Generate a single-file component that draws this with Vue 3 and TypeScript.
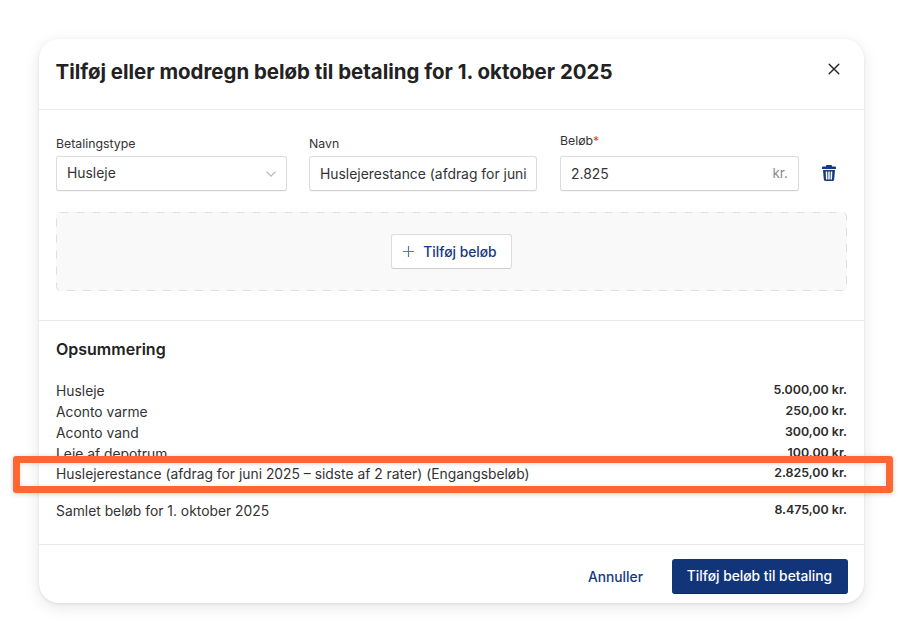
<script setup lang="ts">
interface Row { label: string; amount: string }
const rows: Row[] = [
  { label: 'Husleje', amount: '5.000,00 kr.' },
  { label: 'Aconto varme', amount: '250,00 kr.' },
  { label: 'Aconto vand', amount: '300,00 kr.' },
  { label: 'Leje af depotrum', amount: '100,00 kr.' },
  { label: 'Huslejerestance (afdrag for juni 2025 – sidste af 2 rater) (Engangsbeløb)', amount: '2.825,00 kr.' },
]
</script>

<template>
  <div class="page">
    <section class="card">
      <header class="head">
        <h1 class="title">Tilføj eller modregn beløb til betaling for 1. oktober 2025</h1>
        <svg class="close" width="12" height="12" viewBox="0 0 12 12" fill="none" stroke="#222" stroke-width="1.4" stroke-linecap="round">
          <path d="M1.2 1.2 10.8 10.8M10.8 1.2 1.2 10.8" />
        </svg>
      </header>

      <div class="form">
        <div class="fields">
          <div class="field f-type">
            <label class="label">Betalingstype</label>
            <div class="control select">
              <span class="value v-select">Husleje</span>
              <svg width="10" height="6" viewBox="0 0 10 6" fill="none" stroke="#b5b5b5" stroke-width="1.1">
                <path d="M.5.7 5 5.2 9.5.7" />
              </svg>
            </div>
          </div>
          <div class="field f-name">
            <label class="label">Navn</label>
            <div class="control"><span class="value">Huslejerestance (afdrag for juni</span></div>
          </div>
          <div class="field f-amount">
            <label class="label label-high">Beløb<span class="req">*</span></label>
            <div class="control amount">
              <span class="value">2.825</span>
              <span class="unit">kr.</span>
            </div>
          </div>
          <svg class="trash" width="14" height="16" viewBox="0 0 14 16">
            <path fill="#16397f" fill-rule="evenodd" d="M5 0h4a1 1 0 0 1 1 1v.6h3a1 1 0 0 1 1 1V4H0V2.600a1 1 0 0 1 1-1h3V1a1 1 0 0 1 1-1ZM1 5h12l-.8 9.600A1.500 1.500 0 0 1 10.700 16H3.300a1.500 1.500 0 0 1-1.500-1.400L1 5Zm2.700 1.600.3 7.800h1.500L5.200 6.600H3.700Zm2.550 0v7.800h1.500V6.600h-1.500Zm2.550 0-.3 7.800h1.500l.3-7.800H8.800Z" />
          </svg>
        </div>

        <div class="dropzone">
          <svg class="dashes" width="791" height="79" viewBox="0 0 791 79" fill="none">
            <rect x=".5" y=".5" width="790" height="78" rx="4" stroke="#dedede" stroke-dasharray="8 8" />
          </svg>
          <button class="add" type="button">
            <svg width="11" height="11" viewBox="0 0 11 11" fill="none" stroke="#5f78a8" stroke-width="1.2">
              <path d="M5.500 0v11M0 5.500h11" />
            </svg>
            <span>Tilføj beløb</span>
          </button>
        </div>
      </div>

      <div class="summary">
        <h2 class="subtitle">Opsummering</h2>
        <div class="rows">
          <div v-for="row in rows" :key="row.label" class="row">
            <span class="row-label">{{ row.label }}</span>
            <span class="row-amount">{{ row.amount }}</span>
          </div>
          <div class="highlight"></div>
        </div>
        <div class="row total">
          <span class="row-label">Samlet beløb for 1. oktober 2025</span>
          <span class="row-amount">8.475,00 kr.</span>
        </div>
      </div>

      <footer class="foot">
        <button class="cancel" type="button">Annuller</button>
        <button class="primary" type="button">Tilføj beløb til betaling</button>
      </footer>
    </section>
  </div>
</template>

<style scoped>
.page {
  width: 903px;
  height: 642px;
  box-sizing: border-box;
  padding: 39px 39px 0;
  background: #fff;
  font-family: Inter, "Liberation Sans", sans-serif;
  color: #2b2b2b;
}
.card {
  width: 825px;
  height: 564px;
  box-sizing: border-box;
  border-radius: 20px;
  background: #fff;
  box-shadow: 0 4px 16px rgba(0, 0, 0, 0.1), 0 1px 3px rgba(0, 0, 0, 0.08);
  display: flex;
  flex-direction: column;
}
.head {
  height: 71px;
  box-sizing: border-box;
  border-bottom: 1px solid #e9e9e9;
  padding: 0 24px 0 16.500px;
  display: flex;
  justify-content: space-between;
  align-items: flex-start;
}
.title {
  margin: 19px 0 0;
  font-size: 20.45px;
  line-height: 28px;
  font-weight: 700;
  color: #222;
}
.close { margin-top: 24px; }
.form {
  height: 211px;
  box-sizing: border-box;
  border-bottom: 1px solid #e9e9e9;
  padding: 0 17px;
}
.fields {
  height: 102px;
  display: flex;
  align-items: flex-end;
  padding-bottom: 21px;
  box-sizing: border-box;
}
.field { display: flex; flex-direction: column; }
.f-type { width: 231px; margin-right: 22px; }
.f-name { width: 228px; margin-right: 23px; }
.f-amount { width: 239px; margin-right: 23px; }
.label {
  font-size: 12.3px;
  line-height: 16px;
  color: #333;
  margin-bottom: 4px;
}
.label-high { margin-bottom: 7px; }
.req { color: #e5482d; }
.control {
  height: 35px;
  box-sizing: border-box;
  border: 1px solid #dcdcdc;
  border-bottom-color: #d2d2d2;
  border-radius: 3px;
  background: #fff;
  padding: 0 10px;
  display: flex;
  align-items: center;
  justify-content: space-between;
  box-shadow: 0 1px 1px rgba(0, 0, 0, 0.04);
}
.value {
  font-size: 13.9px;
  color: #333;
  white-space: nowrap;
}
.v-select { margin-top: -1px; }
.unit { font-size: 13.5px; color: #8c8c8c; margin-top: -1px; }
.trash { margin-bottom: 10px; }
.dropzone {
  position: relative;
  height: 79px;
  box-sizing: border-box;
  border-radius: 4px;
  background: #f9f9f9;
  display: flex;
  align-items: center;
  justify-content: center;
}
.dashes {
  position: absolute;
  left: 0;
  top: 0;
}
.add {
  position: relative;
  height: 35px;
  width: 121px;
  box-sizing: border-box;
  border: 1px solid #dcdcdc;
  border-bottom-color: #cfcfcf;
  border-radius: 3px;
  background: #fff;
  color: #16397f;
  font: 500 13.800px Inter, "Liberation Sans", sans-serif;
  display: flex;
  align-items: center;
  justify-content: center;
  gap: 9px;
  padding: 0 3px 0 0;
}
.summary {
  flex: 1;
  box-sizing: border-box;
  border-bottom: 1px solid #e9e9e9;
  padding: 0 17px;
}
.subtitle {
  margin: 18px 0 21.8px;
  font-size: 16px;
  line-height: 20px;
  font-weight: 600;
  color: #222;
}
.rows { position: relative; }
.row {
  height: 20.8px;
  display: flex;
  justify-content: space-between;
  align-items: center;
}
.row-label { font-size: 13.85px; color: #333; }
.row-amount {
  font-size: 12.4px;
  font-weight: 600;
  color: #2b2b2b;
  margin-top: -3px;
}
.total { margin-top: 16px; }
.highlight {
  position: absolute;
  left: -43px;
  right: -46px;
  top: 75.2px;
  height: 37px;
  box-sizing: border-box;
  border: 7px solid #ff6633;
  border-radius: 3px;
  box-shadow: 0 1px 5px rgba(0, 0, 0, 0.2), inset 0 1px 5px rgba(0, 0, 0, 0.12);
}
.foot {
  height: 58px;
  box-sizing: border-box;
  padding: 14px 16px 0 0;
  display: flex;
  justify-content: flex-end;
  align-items: flex-start;
}
.cancel {
  height: 35px;
  border: 0;
  background: none;
  padding: 0;
  margin-right: 29px;
  color: #16397f;
  font: 500 13.800px Inter, "Liberation Sans", sans-serif;
}
.primary {
  height: 35px;
  width: 176px;
  border: 0;
  border-bottom: 1px solid #0c2a66;
  border-radius: 3px;
  background: #12357a;
  color: #fff;
  font: 500 13.800px Inter, "Liberation Sans", sans-serif;
  padding: 0 1px 0 0;
}
</style>
